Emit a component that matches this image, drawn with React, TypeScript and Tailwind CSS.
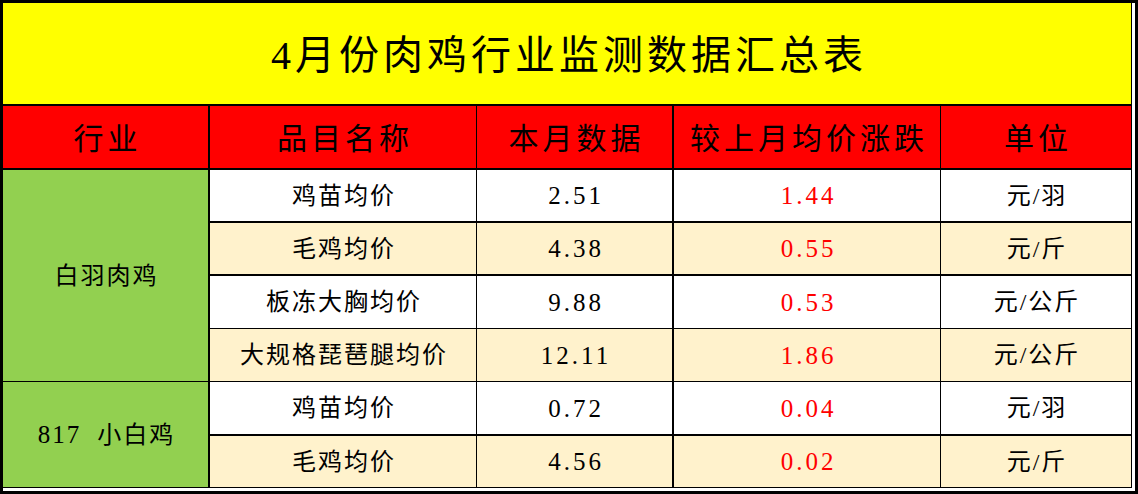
import React from "react";

const FONT = { fontFamily: '"Liberation Serif", "Noto Sans CJK SC", serif' };

type Row = { name: string; value: string; diff: string; unit: string; bg: string; h: string; b: string };

const rows: Row[] = [
  { name: "鸡苗均价", value: "2.51", diff: "1.44", unit: "元/羽", bg: "bg-white", h: "h-[53px]", b: "border-b-2" },
  { name: "毛鸡均价", value: "4.38", diff: "0.55", unit: "元/斤", bg: "bg-[#fff2cc]", h: "h-[53px]", b: "border-b-2" },
  { name: "板冻大胸均价", value: "9.88", diff: "0.53", unit: "元/公斤", bg: "bg-white", h: "h-[53px]", b: "border-b" },
  { name: "大规格琵琶腿均价", value: "12.11", diff: "1.86", unit: "元/公斤", bg: "bg-[#fff2cc]", h: "h-[53px]", b: "border-b" },
  { name: "鸡苗均价", value: "0.72", diff: "0.04", unit: "元/羽", bg: "bg-white", h: "h-[54px]", b: "border-b-2" },
  { name: "毛鸡均价", value: "4.56", diff: "0.02", unit: "元/斤", bg: "bg-[#fff2cc]", h: "h-[52px]", b: "border-b" },
];

export default function App() {
  return (
    <div
      className="w-[1138px] h-[494px] border-[3px] border-black bg-white pr-[3px] pb-[3px] text-black overflow-hidden"
      style={FONT}
    >
      <div className="w-[1129px] h-[485px] flex flex-col border-r border-black">
        {/* Title */}
        <div className="h-[103px] shrink-0 bg-[#ffff00] border-b-2 border-black flex items-center justify-center">
          <span className="text-[40px] leading-none tracking-[4px] pl-[4px] pt-[5px]">4月份肉鸡行业监测数据汇总表</span>
        </div>
        {/* Header */}
        <div className="h-[64px] shrink-0 flex bg-[#ff0000] border-b-2 border-black text-[30px] leading-none tracking-[4px]">
          <div className="w-[207px] border-r-2 border-black flex items-center justify-center pl-[4px] pt-[3px]">行业</div>
          <div className="w-[267px] border-r border-black flex items-center justify-center pl-[4px] pt-[3px]">品目名称</div>
          <div className="w-[197px] border-r-2 border-black flex items-center justify-center pl-[4px] pt-[3px]">本月数据</div>
          <div className="w-[267px] border-r border-black flex items-center justify-center pl-[4px] pt-[3px]">较上月均价涨跌</div>
          <div className="w-[190px] flex items-center justify-center pl-[4px] pt-[3px]">单位</div>
        </div>
        {/* Body */}
        <div className="flex flex-1">
          <div className="w-[207px] shrink-0 flex flex-col border-r-2 border-black bg-[#92d050] text-[24px] leading-none tracking-[2px]">
            <div className="h-[212px] border-b border-black flex items-center justify-center pl-[2px]">白羽肉鸡</div>
            <div className="h-[106px] border-b border-black flex items-center justify-center pl-[2px] whitespace-pre">
              <span className="text-[25px]">817</span>
              <span>  小白鸡</span>
            </div>
          </div>
          <div className="flex flex-col flex-1">
            {rows.map((r, i) => (
              <div key={i} className={`flex ${r.h} ${r.b} border-black ${r.bg} text-[24px] leading-none`}>
                <div className="w-[267px] border-r border-black flex items-center justify-center tracking-[2px] pl-[2px]">{r.name}</div>
                <div className="w-[197px] border-r-2 border-black flex items-center justify-center text-[25px] tracking-[3px] pl-[3px]">{r.value}</div>
                <div className="w-[267px] border-r border-black flex items-center justify-center text-[25px] tracking-[3px] pl-[3px] text-[#ff0000]">{r.diff}</div>
                <div className="w-[190px] flex items-center justify-center tracking-[2px] pl-[2px]">{r.unit}</div>
              </div>
            ))}
          </div>
        </div>
      </div>
    </div>
  );
}
